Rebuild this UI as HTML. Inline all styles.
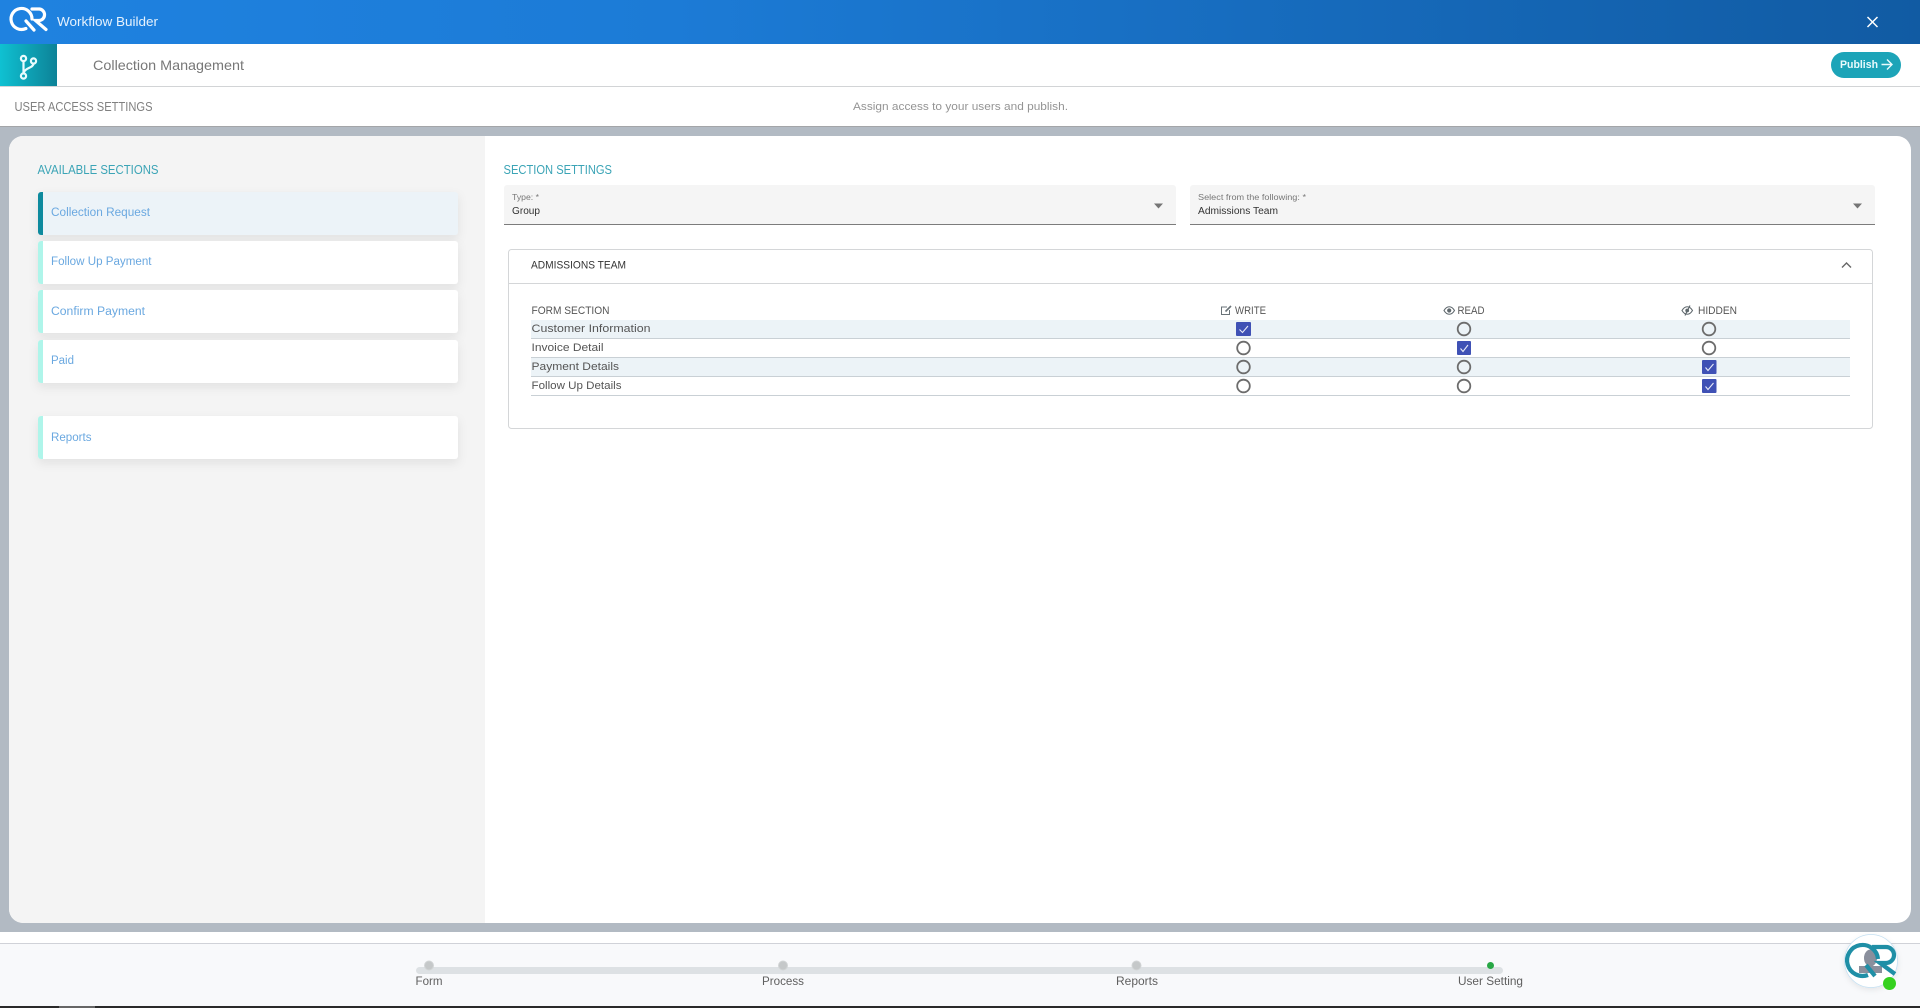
<!DOCTYPE html>
<html lang="en">
<head>
<meta charset="utf-8">
<title>Workflow Builder</title>
<style>
html,body{margin:0;padding:0;width:1920px;height:1008px;overflow:hidden;background:#fff}
svg{display:block}
text{font-family:"Liberation Sans",sans-serif}
</style>
</head>
<body>
<svg xmlns="http://www.w3.org/2000/svg" width="1920" height="1008" viewBox="0 0 1920 1008">
<defs>
<linearGradient id="top" x1="0" x2="1" y1="0" y2="0"><stop offset="0" stop-color="#1f82e0"/><stop offset=".35" stop-color="#1c7bd6"/><stop offset="1" stop-color="#115ba3"/></linearGradient>
<linearGradient id="ico" x1="0" x2="1" y1="0" y2="0"><stop offset="0" stop-color="#0fc1d2"/><stop offset="1" stop-color="#0d8297"/></linearGradient>
<filter id="sh" x="-5%" y="-30%" width="110%" height="170%"><feDropShadow dx="0" dy="4" stdDeviation="5" flood-color="#000" flood-opacity=".08"/></filter>
<filter id="sh2" x="-30%" y="-30%" width="160%" height="160%"><feDropShadow dx="0" dy="2" stdDeviation="3" flood-color="#000" flood-opacity=".08"/></filter>
<clipPath id="mainclip"><rect x="9" y="136" width="1902" height="787" rx="14"/></clipPath>
</defs>

<!-- page bands -->
<rect width="1920" height="1008" fill="#fff"/>
<rect width="1920" height="44" fill="url(#top)"/>
<rect y="86" width="1920" height="1" fill="#d2d4d6"/>
<rect y="126" width="1920" height="806" fill="#b2bac3"/>
<rect y="126" width="1920" height="1" fill="#a3a5a8"/>

<!-- top bar -->
<g fill="none" stroke="#fff" stroke-width="3.2" stroke-linecap="round">
<path d="M25.900 28.500A10.500 10.500 0 1 1 32 19"/>
<path d="M26 21L34 30"/>
<path d="M32 9H39.500A5.800 5.800 0 0 1 39.500 20.500H35.500L46 29.500"/>
</g>
<text x="57" y="26" font-size="13" fill="#e6f2fd" textLength="101" lengthAdjust="spacingAndGlyphs">Workflow Builder</text>
<path d="M1867.500 17L1877.500 27M1877.500 17L1867.500 27" stroke="#fff" stroke-width="1.500" fill="none"/>

<!-- sub header -->
<rect y="44" width="57" height="42" fill="url(#ico)"/>
<g fill="none" stroke="#e9fbfd" stroke-width="2.200">
<circle cx="23.500" cy="58.500" r="2.600"/><circle cx="33.500" cy="61" r="2.600"/><circle cx="23.500" cy="76" r="2.600"/>
<path d="M23.500 61.500V73.300M33.500 63.700C33 68 26 67.500 24 72"/>
</g>
<text x="93" y="70" font-size="14" fill="#777" textLength="151" lengthAdjust="spacingAndGlyphs">Collection Management</text>
<rect x="1831" y="52" width="70" height="26" rx="13" fill="#1ca4b8"/>
<text x="1840" y="68" font-size="11" font-weight="bold" fill="#e8fafc" textLength="38" lengthAdjust="spacingAndGlyphs">Publish</text>
<path d="M1881.500 64.500H1891.500M1887 59.500L1892 64.500L1887 69.500" stroke="#e8fafc" stroke-width="1.400" fill="none"/>

<!-- third row -->
<text x="14.500" y="111" font-size="13" fill="#808080" textLength="138" lengthAdjust="spacingAndGlyphs">USER ACCESS SETTINGS</text>
<text x="853" y="110" font-size="11" fill="#949494" textLength="215" lengthAdjust="spacingAndGlyphs">Assign access to your users and publish.</text>

<!-- main card -->
<g clip-path="url(#mainclip)">
<rect x="9" y="136" width="1902" height="787" fill="#fff"/>
<rect x="9" y="136" width="476" height="787" fill="#f4f4f4"/>
</g>

<text x="37.500" y="174" font-size="13" fill="#3ba4b6" textLength="121" lengthAdjust="spacingAndGlyphs">AVAILABLE SECTIONS</text>

<!-- list -->
<g filter="url(#sh)"><rect x="38" y="192" width="420" height="43" rx="3" fill="#ecf3f8"/></g>
<g filter="url(#sh)"><rect x="38" y="241" width="420" height="43" rx="3" fill="#fff"/></g>
<g filter="url(#sh)"><rect x="38" y="290" width="420" height="43" rx="3" fill="#fff"/></g>
<g filter="url(#sh)"><rect x="38" y="340" width="420" height="43" rx="3" fill="#fff"/></g>
<g filter="url(#sh)"><rect x="38" y="416" width="420" height="43" rx="3" fill="#fff"/></g>
<path d="M43 192H41a3 3 0 0 0-3 3V232a3 3 0 0 0 3 3h2z" fill="#0d8a9e"/>
<path d="M43 241H41a3 3 0 0 0-3 3V281a3 3 0 0 0 3 3h2z" fill="#aff5ea"/>
<path d="M43 290H41a3 3 0 0 0-3 3V330a3 3 0 0 0 3 3h2z" fill="#aff5ea"/>
<path d="M43 340H41a3 3 0 0 0-3 3V380a3 3 0 0 0 3 3h2z" fill="#aff5ea"/>
<path d="M43 416H41a3 3 0 0 0-3 3V456a3 3 0 0 0 3 3h2z" fill="#aff5ea"/>
<g font-size="11.500" fill="#6aa8e0">
<text x="51" y="216" textLength="99" lengthAdjust="spacingAndGlyphs">Collection Request</text>
<text x="51" y="265" textLength="100.500" lengthAdjust="spacingAndGlyphs">Follow Up Payment</text>
<text x="51" y="315" textLength="94" lengthAdjust="spacingAndGlyphs">Confirm Payment</text>
<text x="51" y="364" textLength="23" lengthAdjust="spacingAndGlyphs">Paid</text>
<text x="51" y="441" textLength="40.500" lengthAdjust="spacingAndGlyphs">Reports</text>
</g>

<!-- right panel -->
<text x="503.500" y="174" font-size="13" fill="#3ba4b6" textLength="108.500" lengthAdjust="spacingAndGlyphs">SECTION SETTINGS</text>

<path d="M504 224V188a3 3 0 0 1 3-3H1173a3 3 0 0 1 3 3V224z" fill="#f5f5f5"/>
<rect x="504" y="224" width="672" height="1" fill="#7c7c7c"/>
<text x="512" y="200" font-size="8.500" fill="#777" textLength="27" lengthAdjust="spacingAndGlyphs">Type: *</text>
<text x="512" y="214" font-size="10" fill="#333" textLength="28" lengthAdjust="spacingAndGlyphs">Group</text>
<path d="M1154 203.500H1163L1158.500 208.500z" fill="#757575"/>

<path d="M1190 224V188a3 3 0 0 1 3-3H1872a3 3 0 0 1 3 3V224z" fill="#f5f5f5"/>
<rect x="1190" y="224" width="685" height="1" fill="#7c7c7c"/>
<text x="1198" y="200" font-size="8.500" fill="#777" textLength="108" lengthAdjust="spacingAndGlyphs">Select from the following: *</text>
<text x="1198" y="214" font-size="10" fill="#333" textLength="80" lengthAdjust="spacingAndGlyphs">Admissions Team</text>
<path d="M1853 203.500H1862L1857.500 208.500z" fill="#757575"/>

<!-- card -->
<rect x="508.500" y="249.500" width="1364" height="179" rx="3" fill="#fff" stroke="#d4d6d8"/>
<rect x="509" y="283" width="1363" height="1" fill="#d4d6d8"/>
<text x="531" y="268.500" font-size="11" fill="#333" textLength="95" lengthAdjust="spacingAndGlyphs">ADMISSIONS TEAM</text>
<path d="M1842 267.500L1846.500 263L1851 267.500" fill="none" stroke="#666" stroke-width="1.400"/>

<!-- table -->
<text x="531.500" y="314" font-size="11" fill="#555" textLength="78" lengthAdjust="spacingAndGlyphs">FORM SECTION</text>

<path d="M1227 307H1221.500V314.500H1229.500V310" fill="none" stroke="#6a7378" stroke-width="1"/>
<path d="M1225.500 311.500L1231 306" stroke="#6a7378" stroke-width="1.600" fill="none"/>
<text x="1235" y="314" font-size="11" fill="#555" textLength="31" lengthAdjust="spacingAndGlyphs">WRITE</text>

<path d="M1444 310.500C1447 305.500 1451.500 305.500 1454.500 310.500C1451.500 315.500 1447 315.500 1444 310.500z" fill="none" stroke="#5f686d" stroke-width="1.100"/>
<circle cx="1449.200" cy="310.500" r="2.100" fill="#5f686d"/>
<text x="1457.500" y="314" font-size="11" fill="#555" textLength="27" lengthAdjust="spacingAndGlyphs">READ</text>

<path d="M1682 310.500C1685 305.500 1689.500 305.500 1692.500 310.500C1689.500 315.500 1685 315.500 1682 310.500z" fill="none" stroke="#5f686d" stroke-width="1.100"/>
<circle cx="1687.200" cy="310.500" r="1.900" fill="#5f686d"/>
<path d="M1690 305.500L1685 315.500" stroke="#5f686d" stroke-width="1.100"/>
<text x="1698" y="314" font-size="11" fill="#555" textLength="39" lengthAdjust="spacingAndGlyphs">HIDDEN</text>

<rect x="531" y="320" width="1319" height="18" fill="#ecf3f7"/>
<rect x="531" y="358" width="1319" height="18" fill="#ecf3f7"/>
<g fill="#c9d0d5">
<rect x="531" y="338" width="1319" height="1"/>
<rect x="531" y="357" width="1319" height="1"/>
<rect x="531" y="376" width="1319" height="1"/>
<rect x="531" y="395" width="1319" height="1"/>
</g>
<g font-size="11" fill="#555">
<text x="531.500" y="332" textLength="119" lengthAdjust="spacingAndGlyphs">Customer Information</text>
<text x="531.500" y="351" textLength="72" lengthAdjust="spacingAndGlyphs">Invoice Detail</text>
<text x="531.500" y="370" textLength="87.500" lengthAdjust="spacingAndGlyphs">Payment Details</text>
<text x="531.500" y="389" textLength="90" lengthAdjust="spacingAndGlyphs">Follow Up Details</text>
</g>

<g fill="none" stroke="#6c6c6c" stroke-width="1.800">
<circle cx="1464" cy="329" r="6.300"/>
<circle cx="1709" cy="329" r="6.300"/>
<circle cx="1243.500" cy="348" r="6.300"/>
<circle cx="1709" cy="348" r="6.300"/>
<circle cx="1243.500" cy="367" r="6.300"/>
<circle cx="1464" cy="367" r="6.300"/>
<circle cx="1243.500" cy="386" r="6.300"/>
<circle cx="1464" cy="386" r="6.300"/>
</g>
<g fill="#3f51b5">
<rect x="1236" y="322" width="15" height="14" rx="1"/>
<rect x="1457" y="341" width="14" height="14" rx="1"/>
<rect x="1702" y="360" width="14.500" height="14" rx="1"/>
<rect x="1702" y="379" width="14.500" height="14" rx="1"/>
</g>
<g fill="none" stroke="#e8ebf8" stroke-width="1.100">
<path d="M1239.500 329.500L1242.500 332.500L1248 326"/>
<path d="M1460.500 348.500L1463 351.500L1468 345"/>
<path d="M1705.500 367.500L1708 370.500L1713.500 364"/>
<path d="M1705.500 386.500L1708 389.500L1713.500 383"/>
</g>

<!-- footer -->
<rect y="943" width="1920" height="1" fill="#d0d2d8"/>
<rect y="944" width="1920" height="62" fill="#f8f9fb"/>
<rect y="1006" width="1920" height="2" fill="#2a2a2a"/>
<rect x="59" y="1006" width="36" height="2" fill="#666"/>
<rect x="416" y="967" width="1087" height="7" rx="3.500" fill="#dde1e4"/>
<g fill="#c5c8c9" stroke="#d2d5d6" stroke-width="1">
<circle cx="429" cy="965.500" r="4.500"/>
<circle cx="783" cy="965.500" r="4.500"/>
<circle cx="1136.500" cy="965.500" r="4.500"/>
</g>
<circle cx="1490.500" cy="965.500" r="3.500" fill="#27a745"/>
<g font-size="11.500" fill="#5f5f5f" text-anchor="middle">
<text x="429" y="985" textLength="27" lengthAdjust="spacingAndGlyphs">Form</text>
<text x="783" y="985" textLength="42" lengthAdjust="spacingAndGlyphs">Process</text>
<text x="1137" y="985" textLength="42" lengthAdjust="spacingAndGlyphs">Reports</text>
<text x="1490.500" y="985" textLength="65" lengthAdjust="spacingAndGlyphs">User Setting</text>
</g>

<!-- floating logo -->
<circle cx="1871" cy="961" r="26.500" fill="#fff" stroke="#c4e0f2" stroke-width=".8" filter="url(#sh2)"/>
<g fill="#8a8f9c">
<ellipse cx="1870.500" cy="958" rx="6.500" ry="8.500"/>
<path d="M1859 966H1882V973H1859z"/>
</g>
<g fill="none" stroke="#1f8fa6" stroke-width="4.200">
<path d="M1868 975A15.500 15.500 0 1 1 1878 959"/>
<path d="M1866 965L1875 976"/>
<path d="M1872 947H1886A7.800 7.800 0 0 1 1886 963H1880L1895 974"/>
</g>
<circle cx="1889.500" cy="983.500" r="6.500" fill="#35d11f"/>
</svg>
</body>
</html>
